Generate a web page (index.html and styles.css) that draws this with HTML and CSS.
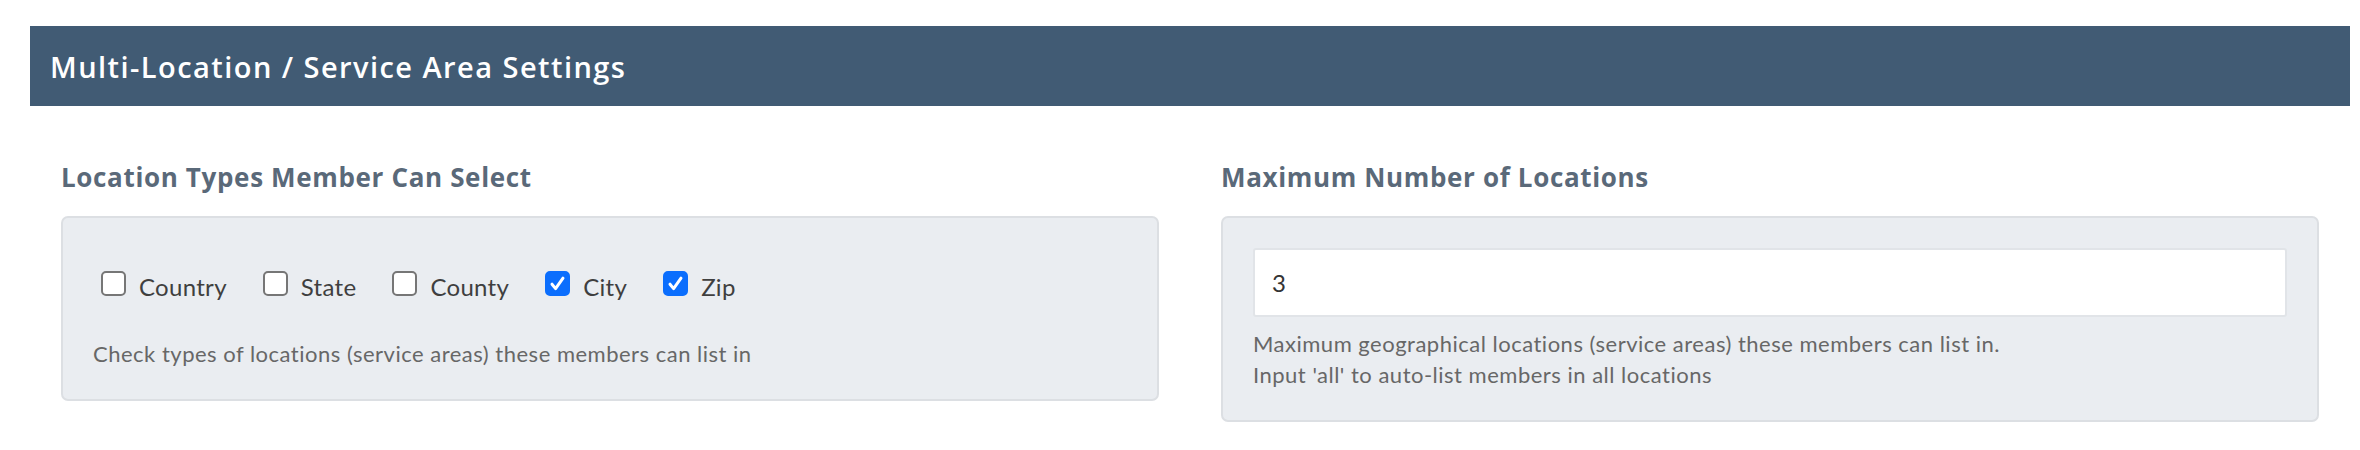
FILE: index.html
```html
<!DOCTYPE html>
<html lang="en">
<head>
<meta charset="utf-8">
<title>Multi-Location / Service Area Settings</title>
<link rel="stylesheet" href="styles.css">
</head>
<body>
<div class="page">
  <div class="bar"><h1 class="bar-title">Multi-Location / Service Area Settings</h1></div>
  <div class="cols">
    <section class="col">
      <h2 class="col-title">Location Types Member Can Select</h2>
      <div class="well well-left">
        <div class="checks">
          <label class="check"><span class="box"></span><span class="check-label">Country</span></label>
          <label class="check"><span class="box"></span><span class="check-label">State</span></label>
          <label class="check"><span class="box"></span><span class="check-label">County</span></label>
          <label class="check"><span class="box box-on"><svg viewBox="0 0 25 25" width="25" height="25"><path d="M7 13.2 L10.6 17.6 L18 7.2" fill="none" stroke="#fff" stroke-width="3" stroke-linecap="round" stroke-linejoin="round"/></svg></span><span class="check-label">City</span></label>
          <label class="check"><span class="box box-on"><svg viewBox="0 0 25 25" width="25" height="25"><path d="M7 13.2 L10.6 17.6 L18 7.2" fill="none" stroke="#fff" stroke-width="3" stroke-linecap="round" stroke-linejoin="round"/></svg></span><span class="check-label">Zip</span></label>
        </div>
        <p class="help help-left">Check types of locations (service areas) these members can list in</p>
      </div>
    </section>
    <section class="col">
      <h2 class="col-title">Maximum Number of Locations</h2>
      <div class="well">
        <div class="input">3</div>
        <p class="help">Maximum geographical locations (service areas) these members can list in.<br>Input 'all' to auto-list members in all locations</p>
      </div>
    </section>
  </div>
</div>
</body>
</html>
```

FILE: styles.css
```css
html, body {
  margin: 0;
  padding: 0;
  background: #ffffff;
}
body {
  font-family: "Lato", "Noto Sans", sans-serif;
}
.page {
  padding: 26px 10px 0 30px;
}
.bar {
  height: 80px;
  background: #415b74;
  display: flex;
  align-items: center;
  padding-left: 20px;
}
.bar-title {
  margin: 0;
  color: #ffffff;
  font-family: "Open Sans", "Lato", sans-serif;
  font-size: 29px;
  font-weight: 600;
  letter-spacing: 1.45px;
  line-height: 1;
}
.cols {
  display: grid;
  grid-template-columns: 1fr 1fr;
  column-gap: 62px;
  padding: 0 31px;
  align-items: start;
}
.col-title {
  margin: 56px 0 23px 0;
  font-family: "Open Sans", "Lato", sans-serif;
  font-size: 26px;
  line-height: 31px;
  font-weight: 700;
  letter-spacing: 0.65px;
  color: #5a6979;
}
.well {
  background: #eaedf1;
  border: 2px solid #dcdfe3;
  border-radius: 7px;
  padding: 30px;
}
.checks {
  display: flex;
  align-items: center;
  gap: 36px;
  margin-top: 23px;
  padding-left: 8px;
  height: 25px;
}
.check {
  display: flex;
  align-items: center;
  gap: 13px;
}
.box {
  width: 25px;
  height: 25px;
  box-sizing: border-box;
  border: 2px solid #767676;
  border-radius: 5px;
  background: #ffffff;
  display: block;
  flex: none;
}
.box-on {
  background: #0b6efd;
  border-color: #0b6efd;
  position: relative;
}
.box-on svg {
  position: absolute;
  left: -2px;
  top: -2px;
}
.check-label {
  font-size: 24px;
  color: #3f3f3f;
  padding-top: 5px;
  line-height: 25px;
  letter-spacing: 0.3px;
}
.help {
  margin: 11px 0 0 0;
  font-size: 22px;
  line-height: 31px;
  letter-spacing: 0.5px;
  color: #676767;
}
.help-left {
  margin-top: 42px;
}
.input {
  height: 69px;
  box-sizing: border-box;
  background: #ffffff;
  border: 2px solid #e1e4e8;
  border-radius: 3px;
  padding-left: 17px;
  display: flex;
  align-items: center;
  font-size: 24px;
  color: #333333;
}
```
